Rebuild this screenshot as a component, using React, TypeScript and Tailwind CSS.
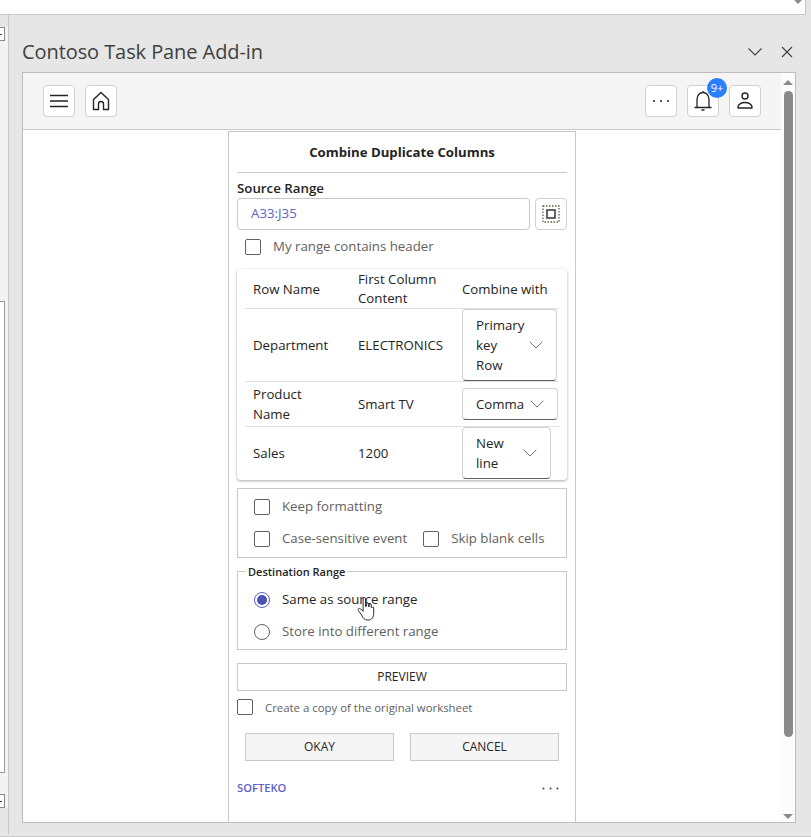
import React from 'react'
import { ChevronDown } from 'lucide-react'

const IconButton = ({ children }: { children: React.ReactNode }) => (
  <button className="relative flex h-8 w-8 items-center justify-center rounded-[4px] border border-[#d1d1d1] bg-white">
    {children}
  </button>
)

const Check = ({ label, small }: { label: string; small?: boolean }) => (
  <label className="flex items-center">
    <span className="h-4 w-4 shrink-0 rounded-[2px] border border-[#616161] bg-white" />
    <span className={small ? 'ml-3 text-[11.4px] text-[#616161]' : 'ml-[12px] text-[13.25px] text-[#616161]'}>{label}</span>
  </label>
)

const Select = ({ label, className }: { label: string; className: string }) => (
  <div className={`flex items-center rounded-[4px] border border-[#d1d1d1] border-b-[#616161] bg-white pl-[13px] pr-2 ${className}`}>
    <span className="min-w-0 flex-1 text-[13.25px] leading-5 text-[#242424]">{label}</span>
    <ChevronDown className="h-6 w-6 shrink-0 text-[#757575]" strokeWidth={1} />
  </div>
)

const Row = ({ name, value, children, height }: { name: string; value: string; children: React.ReactNode; height: string }) => (
  <div className={`grid grid-cols-[105px_104px_1fr] items-center border-t border-[#e0e0e0] pl-2 ${height}`}>
    <span className="w-[85px] text-[13.25px] leading-5 text-[#242424]">{name}</span>
    <span className="text-[13.25px] leading-5 text-[#242424]">{value}</span>
    {children}
  </div>
)

const SheetTab = () => (
  <div className="flex h-[14px] w-[5px] items-center border-y border-r border-[#8a8a8a] bg-white">
    <span className="h-px w-[2px] bg-[#404040]" />
  </div>
)

export default function App() {
  return (
    <div className="relative flex h-[837px] w-[811px] flex-col overflow-hidden border-b border-[#c8c8c8] bg-[#e6e6e6] font-['Open_Sans','Noto_Sans',sans-serif]">
      {/* Top of the sheet behind the pane */}
      <div className="flex h-[15px] w-[806px] shrink-0 justify-end border-b border-r border-[#c8c8c8] bg-white pr-[3px]">
        <svg width="8" height="5" viewBox="0 0 8 5">
          <path d="M0 0h8L4 4z" fill="#8a8a8a" />
        </svg>
      </div>

      <div className="flex min-h-0 flex-1">
        {/* Left strip of the sheet */}
        <div className="h-[819px] w-[9px] shrink-0 border-r border-[#c8c8c8] pt-[12px]">
          <div className="flex h-[781px] flex-col bg-[#f3f3f3]">
            <SheetTab />
            <div className="mt-[260px] h-[472px] w-[5px] border-y border-r border-[#9a9a9a] bg-white" />
            <div className="mt-[21px]">
              <SheetTab />
            </div>
          </div>
        </div>

        {/* Task pane */}
        <div className="flex min-w-0 flex-1 flex-col pl-[13px] pr-[15px]">
          <div className="flex h-[57px] shrink-0 items-center justify-between pr-[3px] pt-[16px]">
            <span className="text-[20px] tracking-[-0.08px] text-[#404040]">Contoso Task Pane Add-in</span>
            <div className="flex items-center gap-[19px]">
              <svg width="14" height="8" viewBox="0 0 14 8" fill="none" stroke="#404040" strokeWidth="1.1">
                <path d="M.5.5 7 7 13.500.5" />
              </svg>
              <svg width="12" height="12" viewBox="0 0 12 12" fill="none" stroke="#404040" strokeWidth="1.1">
                <path d="M1 1l10 10M11 1 1 11" />
              </svg>
            </div>
          </div>

          <div className="flex h-[751px] flex-col border border-[#bdbdbd] bg-white">
            <div className="flex min-h-0 flex-1">
              <div className="flex min-w-0 flex-1 flex-col">
                {/* Toolbar */}
                <div className="flex h-[57px] shrink-0 items-center justify-between border-b border-[#c8c8c8] bg-[#f5f5f5] pl-5 pr-5">
                  <div className="flex gap-[10px]">
                    <IconButton>
                      <svg width="20" height="20" viewBox="0 0 20 20" fill="none" stroke="#242424" strokeWidth="1.3">
                        <path d="M1 4.500h18M1 10h18M1 15.500h18" />
                      </svg>
                    </IconButton>
                    <IconButton>
                      <svg width="20" height="20" viewBox="0 0 20 20" fill="none" stroke="#242424" strokeWidth="1.4">
                        <path d="M2.500 8.500 10 1.500l7.500 7V18.500h-5V13a2.500 2.500 0 0 0-5 0v5.500h-5z" strokeLinejoin="round" />
                      </svg>
                    </IconButton>
                  </div>
                  <div className="flex gap-[10px]">
                    <IconButton>
                      <svg width="18" height="4" viewBox="0 0 18 4" fill="#242424">
                        <circle cx="2" cy="2" r="1" />
                        <circle cx="9" cy="2" r="1" />
                        <circle cx="16" cy="2" r="1" />
                      </svg>
                    </IconButton>
                    <IconButton>
                      <svg width="20" height="22" viewBox="0 0 20 22" fill="none" stroke="#242424" strokeWidth="1.3">
                        <path d="M4 17V9.500c0-4 2.500-7 6-7s6 3 6 7V17M1.500 17.500h17M10 1v1.500" />
                        <path d="M8.500 20h3" strokeWidth="1.5" />
                      </svg>
                      <span className="absolute -right-[9px] -top-[8px] flex h-5 w-5 items-center justify-center rounded-full bg-[#2a7fff] text-[11px] font-medium text-white">
                        9+
                      </span>
                    </IconButton>
                    <IconButton>
                      <svg width="18" height="20" viewBox="0 0 18 20" fill="none" stroke="#242424" strokeWidth="1.4">
                        <circle cx="9" cy="5" r="3" />
                        <path d="M2 17v-1c0-2.500 3-4.500 7-4.500s7 2 7 4.500v1H2z" strokeLinejoin="round" />
                      </svg>
                    </IconButton>
                  </div>
                </div>

                {/* Add-in panel */}
                <div className="flex min-h-0 flex-1 justify-center pt-[1px]">
                  <div className="flex w-[348px] flex-col border-x border-t border-[#c8c8c8] px-2">
                    <div className="flex h-[41px] shrink-0 items-center justify-center border-b border-[#c8c8c8] pt-[1px] text-[13.2px] font-bold text-[#242424]">
                      Combine Duplicate Columns
                    </div>

                    <div className="mt-[6px] text-[13.3px] leading-[18px] font-semibold text-[#242424]">Source Range</div>
                    <div className="mt-[1px] flex h-8 gap-[5px]">
                      <div className="flex flex-1 items-center rounded-[4px] border border-[#c8c8c8] pl-[13px] text-[13.25px] text-[#5b5fc7]">A33:J35</div>
                      <button className="flex h-8 w-8 items-center justify-center rounded-[4px] border border-[#d1d1d1] bg-white">
                        <svg width="18" height="18" viewBox="0 0 18 18" fill="none">
                          <rect x="1" y="1" width="16" height="16" stroke="#6b5a3c" strokeWidth="1.3" strokeDasharray="1.500 1.500" />
                          <rect x="5" y="5" width="8" height="8" stroke="#404040" strokeWidth="1.6" />
                        </svg>
                      </button>
                    </div>
                    <div className="mt-[7px] pl-2">
                      <Check label="My range contains header" />
                    </div>

                    {/* Column table */}
                    <div className="mt-[12px] rounded-[4px] bg-white px-2 pb-[1px] shadow-[0_1px_3px_rgba(0,0,0,0.35)]">
                      <div className="grid h-[39px] grid-cols-[105px_104px_1fr] items-center pl-2 pt-[3px]">
                        <span className="text-[13.25px] text-[#242424]">Row Name</span>
                        <span className="-mt-[2px] w-[96px] text-[13.25px] leading-[19px] text-[#242424]">First Column Content</span>
                        <span className="text-[13.25px] text-[#242424]">Combine with</span>
                      </div>
                      <Row name="Department" value="ELECTRONICS" height="h-[73px]">
                        <Select label="Primary key Row" className="h-[72px] w-[95px]" />
                      </Row>
                      <Row name="Product Name" value="Smart TV" height="h-[45px]">
                        <Select label="Comma" className="h-[32px] w-[96px]" />
                      </Row>
                      <Row name="Sales" value="1200" height="h-[53px]">
                        <Select label="New line" className="h-[52px] w-[89px]" />
                      </Row>
                    </div>

                    {/* Options */}
                    <div className="mt-2 flex h-[70px] shrink-0 flex-col justify-center gap-3 border border-[#c8c8c8] px-4">
                      <Check label="Keep formatting" />
                      <div className="flex gap-4">
                        <Check label="Case-sensitive event" />
                        <Check label="Skip blank cells" />
                      </div>
                    </div>

                    {/* Destination */}
                    <fieldset className="mt-[7px] h-[85px] shrink-0 border border-[#c8c8c8] px-4">
                      <legend className="-ml-[8px] px-[2px] text-[11px] leading-[13px] font-semibold text-[#242424]">Destination Range</legend>
                      <div className="mt-[12px] flex flex-col gap-3">
                        <label className="flex items-center">
                          <span className="flex h-4 w-4 items-center justify-center rounded-full border border-[#5b5fc7]">
                            <span className="h-[10px] w-[10px] rounded-full bg-[#4f52b2]" />
                          </span>
                          <span className="ml-[12px] text-[13.25px] text-[#242424]">Same as source range</span>
                        </label>
                        <label className="flex items-center">
                          <span className="h-4 w-4 rounded-full border border-[#616161]" />
                          <span className="ml-[12px] text-[13.25px] text-[#616161]">Store into different range</span>
                        </label>
                      </div>
                    </fieldset>

                    <button className="mt-[13px] h-7 shrink-0 border border-[#c8c8c8] bg-white pt-[1px] text-[12px] font-medium text-[#242424]">PREVIEW</button>
                    <div className="mt-[8px]">
                      <Check label="Create a copy of the original worksheet" small />
                    </div>

                    <div className="mt-[17px] flex justify-between px-2">
                      <button className="h-7 w-[149px] border border-[#c8c8c8] bg-[#f5f5f5] pt-[1px] text-[12px] font-medium text-[#242424]">OKAY</button>
                      <button className="h-7 w-[149px] border border-[#c8c8c8] bg-[#f5f5f5] pt-[1px] text-[12px] font-medium text-[#242424]">CANCEL</button>
                    </div>

                    <div className="mt-[19px] flex items-center justify-between pr-2">
                      <span className="text-[11.2px] font-semibold text-[#5b5fc7]">SOFTEKO</span>
                      <svg width="17" height="3" viewBox="0 0 17 3" fill="#424242">
                        <circle cx="1.500" cy="1.500" r="1" />
                        <circle cx="8.500" cy="1.500" r="1" />
                        <circle cx="15.500" cy="1.500" r="1" />
                      </svg>
                    </div>
                  </div>
                </div>
              </div>

              {/* Scrollbar */}
              <div className="flex w-[14px] shrink-0 flex-col items-center bg-[#fcfcfc] pb-[3px] pt-[7px]">
                <svg width="10" height="5" viewBox="0 0 10 5">
                  <path d="M0 5h10L5 0z" fill="#8a8a8a" />
                </svg>
                <div className="mt-[6px] h-[646px] w-[9px] rounded-full bg-[#8a8a8a]" />
                <div className="flex-1" />
                <svg width="10" height="5" viewBox="0 0 10 5">
                  <path d="M0 0h10L5 5z" fill="#8a8a8a" />
                </svg>
              </div>
            </div>
          </div>
        </div>
      </div>

      {/* Mouse pointer over the radio label */}
      <svg className="absolute left-[357px] top-[596px]" width="18" height="25" viewBox="0 0 18 26" fill="white" stroke="#242424" strokeWidth="1">
        <path d="M6 3c0-2 2.500-2 2.500 0v8l1-.5V8c0-1 2-1 2 0v3h1V9c0-1 2-1 2 0v3h1c0-1 1.500-1 1.500.5V18c0 4-2 7-6 7-4 0-5-2-6.500-5L1 15c-.8-1.500 1-3 2.500-1.500L6 16z" strokeLinejoin="round" />
      </svg>
    </div>
  )
}
